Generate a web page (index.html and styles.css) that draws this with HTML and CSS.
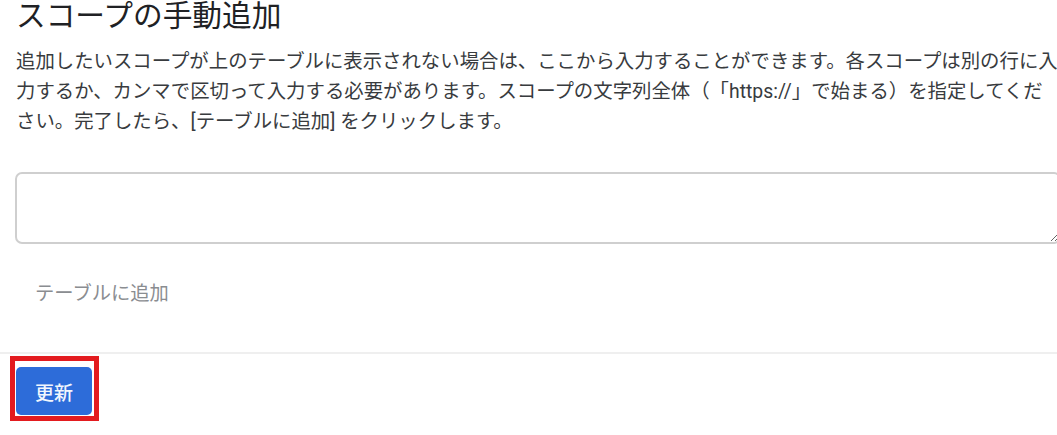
FILE: index.html
```html
<!DOCTYPE html>
<html lang="ja">
<head>
    <meta charset="UTF-8">
    <meta name="viewport" content="width=device-width, initial-scale=1.0">
    <title>スコープの手動追加</title>
    <link rel="stylesheet" href="styles.css">
</head>
<body>
    <div class="section">
        <h1>スコープの手動追加</h1>
        <p class="desc">追加したいスコープが上のテーブルに表示されない場合は、ここから入力することができます。各スコープは別の行に入力するか、カンマで区切って入力する必要があります。スコープの文字列全体（「https://」で始まる）を指定してください。完了したら、[テーブルに追加] をクリックします。</p>

        <textarea class="scopes" id="scopes"></textarea>

        <button class="text-button" disabled>テーブルに追加</button>
    </div>

    <!-- footer actions -->
    <div class="footer">
        <div class="highlight">
            <button class="primary">更新</button>
        </div>
    </div>
</body>
</html>
```

FILE: styles.css
```css
html, body {
    margin: 0;
    padding: 0;
    background-color: #ffffff;
    overflow: hidden;
}
body {
    font-family: Roboto, "Noto Sans CJK JP", sans-serif;
    color: #383b3e;
}
.section {
    width: 1080px;
    padding: 0 0 0 15px;
    display: flex;
    flex-direction: column;
    align-items: flex-start;
}
h1 {
    margin: 0;
    font-size: 29.7px;
    font-weight: 400;
    line-height: 32px;
    color: #202124;
    padding-left: 1px;
}
.desc {
    margin: 15px 0 0 0;
    padding-left: 1px;
    font-size: 19.4px;
    line-height: 30px;
    width: 1042px;
    text-spacing-trim: space-all;
}
.scopes {
    box-sizing: border-box;
    margin-top: 35px;
    width: 1046px;
    height: 72px;
    border: 2px solid #cfcfcf;
    border-radius: 7px;
    resize: vertical;
    font-family: inherit;
}
.text-button {
    margin-top: 30px;
    height: 36px;
    padding: 0 20px;
    background: none;
    border: none;
    font-family: inherit;
    font-size: 19.3px;
    color: #8a8d91;
}
.footer {
    margin-top: 42px;
    border-top: 2px solid #efefef;
    padding-top: 2px;
}
.highlight {
    display: inline-block;
    margin-left: 10px;
    border: 5px solid #e31b1f;
    padding: 6px 2px 1px 1px;
}
.primary {
    display: block;
    width: 76px;
    height: 48px;
    border: none;
    border-radius: 5px;
    background-color: #2d6cd9;
    color: #f2f6fd;
    font-family: inherit;
    font-size: 19px;
    font-weight: 500;
}
```
